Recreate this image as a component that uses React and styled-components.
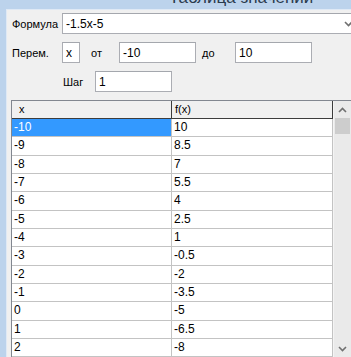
import React from 'react';
import styled, { createGlobalStyle } from 'styled-components';

const Global = createGlobalStyle`
  html, body { margin: 0; padding: 0; }
  body {
    width: 351px;
    height: 357px;
    overflow: hidden;
    font-family: "Liberation Sans", Arial, sans-serif;
    font-size: 12px;
    color: #000;
  }
`;

const Frame = styled.div`
  width: 351px;
  height: 357px;
  overflow: hidden;
  background: #bcd3ec;
  display: flex;
  flex-direction: column;
`;

const TitleBar = styled.div`
  height: 9px;
  flex: none;
  overflow: hidden;
`;

const TitleText = styled.div`
  padding-left: 169px;
  margin-top: -12px;
  font-size: 17px;
  line-height: 20px;
  color: #2a3a4c;
  white-space: nowrap;
`;

const Client = styled.div`
  flex: 1;
  margin-left: 6px;
  border-left: 1px solid #dfe9f5;
  border-top: 1px solid #dfe9f5;
  background: #f0f0f0;
  display: flex;
  flex-direction: column;
  min-height: 0;
`;

const Row = styled.div`
  display: flex;
  align-items: center;
  height: 21px;
  margin-top: ${p => p.$top}px;
  padding-left: ${p => p.$indent || 0}px;
  white-space: nowrap;
`;

const Label = styled.span`
  display: inline-block;
  width: ${p => p.$w}px;
  flex: none;
  padding-left: ${p => p.$pad || 0}px;
  box-sizing: border-box;
  font-size: 11px;
`;

const Input = styled.div`
  width: ${p => p.$w}px;
  height: 21px;
  box-sizing: border-box;
  flex: none;
  background: #fff;
  border: 1px solid #abadb3;
  border-top-color: #a4a7ad;
  padding-left: 3px;
  display: flex;
  align-items: center;
  font-size: 12px;
`;

const Combo = styled(Input)`
  width: 300px;
  padding-right: 8px;
  justify-content: space-between;
`;

const Chevron = ({ up }) => (
  <svg width="9" height="6" viewBox="0 0 9 6">
    <path
      d={up ? 'M1 5 L4.5 1.5 L8 5' : 'M1 1 L4.5 4.5 L8 1'}
      fill="none"
      stroke="#707070"
      strokeWidth="1.6"
    />
  </svg>
);

const GridBox = styled.div`
  margin-top: 8px;
  margin-left: 4px;
  flex: 1;
  min-height: 0;
  border-left: 1px solid #828790;
  border-top: 1px solid #828790;
  background: #fff;
  display: flex;
  overflow: hidden;
`;

const Table = styled.div`
  width: 321px;
  flex: none;
  display: flex;
  flex-direction: column;
`;

const HeadRow = styled.div`
  display: grid;
  grid-template-columns: 160px 160px;
  height: 17px;
  background: #f0f0f0;
  border-bottom: 1px solid #3c3c3c;
  border-right: 1px solid #3c3c3c;
  flex: none;
`;

const HeadCell = styled.div`
  font-size: 11px;
  line-height: 17px;
  padding-left: ${p => p.$pad}px;
  border-right: ${p => (p.$last ? 'none' : '1px solid #3c3c3c')};
`;

const DataRow = styled.div`
  display: grid;
  grid-template-columns: 160px 160px;
  height: 18.33px;
  box-sizing: border-box;
  border-bottom: 1px solid #c3c3c3;
  border-right: 1px solid #c3c3c3;
  flex: none;
`;

const Cell = styled.div`
  font-size: 12px;
  line-height: 17px;
  padding-left: 2px;
  background: ${p => (p.$sel ? '#3399ff' : '#fff')};
  color: ${p => (p.$sel ? '#fff' : '#000')};
  border-right: ${p => (p.$last ? 'none' : '1px solid #c3c3c3')};
`;

const Filler = styled.div`
  flex: 1;
  border-right: 1px solid #c3c3c3;
  display: grid;
  grid-template-columns: 160px 160px;
`;

const FillerCell = styled.div`
  border-right: 1px solid #c3c3c3;
`;

const Scroll = styled.div`
  width: 17px;
  flex: none;
  background: #eaeaea;
  border-left: 1px solid #f4f4f4;
  display: flex;
  flex-direction: column;
  align-items: center;
`;

const Arrow = styled.div`
  height: 17px;
  width: 100%;
  display: flex;
  align-items: center;
  justify-content: center;
  flex: none;
`;

const Thumb = styled.div`
  width: 15px;
  height: 16px;
  background: #cdcdcd;
  flex: none;
`;

const Spacer = styled.div`
  flex: 1;
`;

const data = [];
for (let x = -10; x <= 2; x++) data.push([x, -1.5 * x - 5]);

export default function App() {
  return (
    <>
      <Global />
      <Frame>
        <TitleBar>
          <TitleText>Таблица значений</TitleText>
        </TitleBar>
        <Client>
          <Row $top={3} $indent={5}>
            <Label $w={50}>Формула</Label>
            <Combo>
              <span>-1.5x-5</span>
              <Chevron />
            </Combo>
          </Row>
          <Row $top={8} $indent={5}>
            <Label $w={50}>Перем.</Label>
            <Input $w={18}>x</Input>
            <Label $w={39} $pad={11}>от</Label>
            <Input $w={77}>-10</Input>
            <Label $w={39} $pad={6}>до</Label>
            <Input $w={77}>10</Input>
          </Row>
          <Row $top={8} $indent={56}>
            <Label $w={32}>Шаг</Label>
            <Input $w={77}>1</Input>
          </Row>
          <GridBox>
            <Table>
              <HeadRow>
                <HeadCell $pad={7}>x</HeadCell>
                <HeadCell $pad={3} $last>f(x)</HeadCell>
              </HeadRow>
              {data.map(([x, y], i) => (
                <DataRow key={x}>
                  <Cell $sel={i === 0}>{x}</Cell>
                  <Cell $last>{y}</Cell>
                </DataRow>
              ))}
              <Filler>
                <FillerCell />
              </Filler>
            </Table>
            <Scroll>
              <Arrow>
                <Chevron up />
              </Arrow>
              <Thumb />
              <Spacer />
              <Arrow>
                <Chevron />
              </Arrow>
            </Scroll>
          </GridBox>
        </Client>
      </Frame>
    </>
  );
}
